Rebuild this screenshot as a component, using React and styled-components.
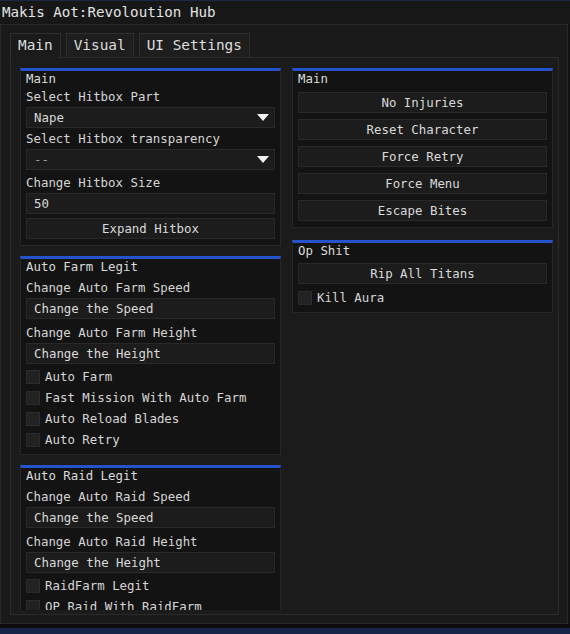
import React from 'react';
import styled, { createGlobalStyle } from 'styled-components';

const GlobalStyle = createGlobalStyle`
  html, body {
    margin: 0;
    padding: 0;
    background: #111111;
    overflow: hidden;
  }
  * {
    box-sizing: border-box;
  }
`;

const Window = styled.div`
  width: 570px;
  height: 634px;
  display: flex;
  flex-direction: column;
  background: #121212;
  border-top: 1px solid #1b2844;
  font-family: "DejaVu Sans Mono", "Liberation Mono", monospace;
  color: #d8d8d8;
`;

const TitleBar = styled.div`
  height: 23px;
  line-height: 23px;
  padding-left: 2px;
  font-size: 14.2px;
  color: #e4e4e4;
  background: #171717;
`;

const Frame = styled.div`
  width: 568px;
  height: 600px;
  display: flex;
  flex-direction: column;
  border: 1px solid #2a2a2a;
  background: #1a1a1a;
  padding: 8px 8px 8px 9px;
`;

const BottomBar = styled.div`
  flex: 1;
  background: linear-gradient(#0c0c0c 0 4px, #17254a 4px);
`;

const TabBar = styled.div`
  display: flex;
  gap: 5px;
  height: 24px;
`;

const Tab = styled.div`
  padding: 0 7px;
  line-height: 23px;
  font-size: 14.4px;
  color: #dedede;
  border: 1px solid #2f2f2f;
  border-bottom: none;
  background: ${({ active }) => (active ? '#1b1b1b' : '#1e1e1e')};
  margin-bottom: ${({ active }) => (active ? '-1px' : '0')};
  position: relative;
`;

const Panel = styled.div`
  flex: 1;
  min-height: 0;
  display: grid;
  grid-template-columns: 261px 261px;
  grid-template-rows: minmax(0, 1fr);
  column-gap: 11px;
  border: 1px solid #2b2b2b;
  background: #1b1b1b;
  padding: 10px 4px 4px 9px;
`;

const Column = styled.div`
  display: flex;
  flex-direction: column;
  gap: ${({ gap }) => gap}px;
  overflow: hidden;
  min-height: 0;
  align-self: ${({ clip }) => (clip ? 'stretch' : 'start')};
`;

const Section = styled.div`
  display: flex;
  flex-direction: column;
  flex-shrink: 0;
  gap: ${({ gap }) => gap}px;
  background: #131313;
  border: 1px solid #262626;
  border-top: 3px solid #2453cc;
  padding: 1px 5px ${({ bottom }) => bottom || 6}px;
`;

const Title = styled.div`
  font-size: 12.4px;
  line-height: 14px;
  color: #dcdcdc;
  white-space: nowrap;
`;

const Label = styled(Title)`
  margin-top: ${({ spaced }) => spaced || 0}px;
  margin-bottom: -1px;
  color: #d6d6d6;
`;

const Field = styled.div`
  height: 21px;
  display: flex;
  align-items: center;
  justify-content: ${({ center }) => (center ? 'center' : 'space-between')};
  padding: 0 ${({ center }) => (center ? '0' : '5px 0 7px')};
  background: #1c1c1c;
  border: 1px solid #292929;
  font-size: 12.4px;
  color: ${({ muted }) => (muted ? '#9a9a9a' : '#dadada')};
  white-space: nowrap;
`;

const Arrow = styled.span`
  width: 0;
  height: 0;
  border-left: 6px solid transparent;
  border-right: 6px solid transparent;
  border-top: 7px solid #f2f2f2;
`;

const CheckRow = styled.div`
  height: 17px;
  display: flex;
  align-items: center;
  gap: 5px;
  font-size: 12.4px;
  color: #d6d6d6;
  white-space: nowrap;
`;

const Box = styled.span`
  width: 14px;
  height: 14px;
  flex-shrink: 0;
  background: #222222;
  border: 1px solid #2c2c2c;
`;

const Select = ({ value, muted }) => (
  <Field muted={muted}>
    <span>{value}</span>
    <Arrow />
  </Field>
);

const Check = ({ children }) => (
  <CheckRow>
    <Box />
    {children}
  </CheckRow>
);

export default function App() {
  return (
    <>
      <GlobalStyle />
      <Window>
        <TitleBar>Makis Aot:Revoloution Hub</TitleBar>
        <Frame>
          <TabBar>
            <Tab active>Main</Tab>
            <Tab>Visual</Tab>
            <Tab>UI Settings</Tab>
          </TabBar>
          <Panel>
            <Column gap={10} clip>
              <Section gap={4}>
                <Title>Main</Title>
                <Label>Select Hitbox Part</Label>
                <Select value="Nape" />
                <Label>Select Hitbox transparency</Label>
                <Select value="--" muted />
                <Label spaced={2}>Change Hitbox Size</Label>
                <Field>50</Field>
                <Field center>Expand Hitbox</Field>
              </Section>
              <Section gap={4} bottom={6}>
                <Title>Auto Farm Legit</Title>
                <Label spaced={3}>Change Auto Farm Speed</Label>
                <Field>Change the Speed</Field>
                <Label spaced={3}>Change Auto Farm Height</Label>
                <Field>Change the Height</Field>
                <Check>Auto Farm</Check>
                <Check>Fast Mission With Auto Farm</Check>
                <Check>Auto Reload Blades</Check>
                <Check>Auto Retry</Check>
              </Section>
              <Section gap={4}>
                <Title>Auto Raid Legit</Title>
                <Label spaced={3}>Change Auto Raid Speed</Label>
                <Field>Change the Speed</Field>
                <Label spaced={3}>Change Auto Raid Height</Label>
                <Field>Change the Height</Field>
                <Check>RaidFarm Legit</Check>
                <Check>OP Raid With RaidFarm</Check>
              </Section>
            </Column>
            <Column gap={12}>
              <Section gap={6}>
                <Title>Main</Title>
                <Field center>No Injuries</Field>
                <Field center>Reset Character</Field>
                <Field center>Force Retry</Field>
                <Field center>Force Menu</Field>
                <Field center>Escape Bites</Field>
              </Section>
              <Section gap={5}>
                <Title>Op Shit</Title>
                <Field center>Rip All Titans</Field>
                <Check>Kill Aura</Check>
              </Section>
            </Column>
          </Panel>
        </Frame>
        <BottomBar />
      </Window>
    </>
  );
}
